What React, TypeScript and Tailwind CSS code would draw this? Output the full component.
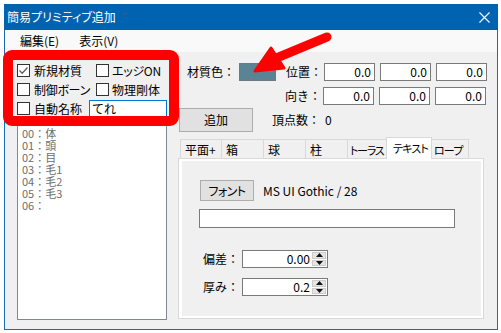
import React from "react";

const tabs = [
  { label: "平面+", w: 42 },
  { label: "箱", w: 43 },
  { label: "球", w: 43 },
  { label: "柱", w: 43 },
  { label: "トーラス", w: 42 },
  { label: "テキスト", w: 46, selected: true },
  { label: "ロープ", w: 40 },
];

const parts = ["00：体", "01：頭", "02：目", "03：毛1", "04：毛2", "05：毛3", "06："];

function Check({ checked }: { checked?: boolean }) {
  return (
    <span className="w-[13px] h-[13px] border border-[#333333] bg-white flex items-center justify-center shrink-0">
      {checked && (
        <svg width="11" height="11" viewBox="0 0 11 11">
          <path d="M1.5 5.5 L4.2 8.2 L9.5 2.5" stroke="#5f5f5f" strokeWidth="1.3" fill="none" />
        </svg>
      )}
    </span>
  );
}

function NumBox({ value }: { value: string }) {
  return (
    <div className="w-[51px] h-[18px] border border-[#7a7a7a] bg-white flex items-center justify-end pr-[3px]">
      {value}
    </div>
  );
}

function Spin({ value }: { value: string }) {
  return (
    <div className="w-[86px] h-[18px] border border-[#7a7a7a] bg-white flex items-stretch">
      <div className="flex-1 flex items-center justify-end pr-[2px]">{value}</div>
      <div className="w-[15px] flex flex-col gap-[1px] py-[1px] pr-[1px]">
        <div className="flex-1 bg-[#e5e5e5] border border-[#cccccc] flex items-center justify-center">
          <svg width="7" height="4" viewBox="0 0 7 4">
            <path d="M0 4 L3.5 0 L7 4 Z" fill="#111" />
          </svg>
        </div>
        <div className="flex-1 bg-[#e5e5e5] border border-[#cccccc] flex items-center justify-center">
          <svg width="7" height="4" viewBox="0 0 7 4">
            <path d="M0 0 L3.5 4 L7 0 Z" fill="#111" />
          </svg>
        </div>
      </div>
    </div>
  );
}

export default function App() {
  return (
    <div className="relative w-[501px] h-[333px] overflow-hidden bg-white pl-[4px] pt-[4px] font-['Noto_Sans_CJK_JP',sans-serif] text-[12px] leading-[14px] text-black">
      {/* window */}
      <div className="w-[494px] h-[326px] border border-t-0 border-[#1a6cb6] flex flex-col bg-[#f0f0f0]">
        {/* title bar */}
        <div className="h-[26px] bg-[#0063b1] flex items-center justify-between pl-[3px] pr-[8px] text-white shrink-0 -mx-[1px]">
          <span className="text-[12px] [font-feature-settings:'palt']">簡易プリミティブ追加</span>
          <svg width="11" height="11" viewBox="0 0 11 11">
            <path d="M0.5 0.5 L10.5 10.5 M10.5 0.5 L0.5 10.5" stroke="white" strokeWidth="1.1" />
          </svg>
        </div>
        {/* menu bar */}
        <div className="h-[22px] bg-[#f9f9f9] flex items-center shrink-0 pl-[15px] gap-[20px]">
          <span>編集(E)</span>
          <span>表示(V)</span>
        </div>
        {/* client */}
        <div className="flex flex-1">
          {/* left column */}
          <div className="ml-[12px] w-[150px] pt-[9px] flex flex-col">
            <div className="h-[19px] flex items-center">
              <div className="w-[79px] flex items-center gap-[4px]">
                <Check checked />
                <span className="[font-feature-settings:'palt']">新規材質</span>
              </div>
              <div className="flex items-center gap-[3px]">
                <Check />
                <span className="[font-feature-settings:'palt'] tracking-[-0.3px]">エッジON</span>
              </div>
            </div>
            <div className="h-[19px] flex items-center">
              <div className="w-[79px] flex items-center gap-[4px]">
                <Check />
                <span className="[font-feature-settings:'palt'] tracking-[-0.3px]">制御ボーン</span>
              </div>
              <div className="flex items-center gap-[3px]">
                <Check />
                <span>物理剛体</span>
              </div>
            </div>
            <div className="h-[19px] flex items-center">
              <div className="w-[72px] flex items-center gap-[4px]">
                <Check />
                <span>自動名称</span>
              </div>
              <div className="w-[78px] h-[18px] border border-[#0078d7] bg-white flex items-center pl-[2px]">
                てれ
              </div>
            </div>
            <div className="mt-[1px] h-[201px] border border-[#828790] bg-white pt-[7px] pl-[4px] text-[#6d6d6d] text-[11px] leading-[12px]">
              {parts.map((p) => (
                <div key={p} className="h-[12px] leading-[12px]">
                  {p}
                </div>
              ))}
            </div>
          </div>

          {/* right column */}
          <div className="ml-[12px] pt-[11px] flex flex-col">
            <div className="h-[18px] flex items-center">
              <span className="ml-[8px] w-[52px]">材質色：</span>
              <div className="w-[37px] h-[18px] bg-[#5a8494] border border-[#6f7a80]" />
              <span className="ml-[10px] w-[38px]">位置：</span>
              <div className="flex gap-[5px]">
                <NumBox value="0.0" />
                <NumBox value="0.0" />
                <NumBox value="0.0" />
              </div>
            </div>
            <div className="mt-[6px] h-[18px] flex items-center">
              <span className="w-[144px] text-right pr-[2px]">向き：</span>
              <div className="flex gap-[5px]">
                <NumBox value="0.0" />
                <NumBox value="0.0" />
                <NumBox value="0.0" />
              </div>
            </div>
            <div className="mt-[3px] h-[24px] flex items-center">
              <div className="w-[74px] h-[24px] bg-[#e1e1e1] border border-[#adadad] flex items-center justify-center">
                追加
              </div>
              <span className="ml-[19px] w-[53px]">頂点数：</span>
              <span>0</span>
            </div>

            {/* tabs */}
            <div className="mt-[5px] h-[21px] flex items-end ml-[1px]">
              {tabs.map((t, i) =>
                t.selected ? (
                  <div
                    key={t.label}
                    className="relative z-10 -ml-[3px] -mr-[2px] -mb-[1px] h-[22px] bg-white border border-b-0 border-[#d9d9d9] pl-[6px] pt-[3px] whitespace-nowrap text-[11px] [font-feature-settings:'palt'] tracking-[-0.8px]"
                    style={{ width: t.w }}
                  >
                    {t.label}
                  </div>
                ) : (
                  <div
                    key={t.label}
                    className={
                      "h-[19px] bg-[#f0f0f0] border border-b-0 border-[#d9d9d9] pt-[3px] whitespace-nowrap [font-feature-settings:'palt'] " +
                      (t.label === "トーラス" ? "pl-[2px] text-[11px] tracking-[-1.3px] " : t.label === "ロープ" ? "pl-[4px] text-[11px] tracking-[-0.8px] " : "pl-[4px] ") +
                      (i > 0 ? "-ml-[1px]" : "")
                    }
                    style={{ width: t.w }}
                  >
                    {t.label}
                  </div>
                )
              )}
            </div>
            <div className="-ml-[1px] w-[306px] h-[161px] border border-[#d9d9d9] bg-white pl-[3px] pt-[2px] pr-[2px] pb-[2px]">
              <div className="w-full h-full bg-[#f0f0f0] pl-[18px] pt-[19px] flex flex-col">
                <div className="flex items-center">
                  <div className="w-[54px] h-[21px] bg-[#e1e1e1] border border-[#adadad] flex items-center justify-center [font-feature-settings:'palt'] tracking-[-0.5px]">
                    フォント
                  </div>
                  <span className="ml-[9px]">MS UI Gothic / 28</span>
                </div>
                <div className="mt-[8px] -ml-[1px] w-[256px] h-[19px] border border-[#7a7a7a] bg-white" />
                <div className="mt-[22px] flex items-center">
                  <span className="ml-[3px] w-[39px]">偏差：</span>
                  <Spin value="0.00" />
                </div>
                <div className="mt-[10px] flex items-center">
                  <span className="ml-[3px] w-[39px]">厚み：</span>
                  <Spin value="0.2" />
                </div>
              </div>
            </div>
          </div>
        </div>
      </div>

      {/* annotations */}
      <div className="absolute left-[3px] top-[50px] w-[176px] h-[76px] border-[10px] border-[#ff0000] rounded-[9px]" />
      <svg className="absolute left-0 top-0" width="501" height="333" viewBox="0 0 501 333">
        <line x1="327" y1="37" x2="274" y2="59" stroke="#ff0000" strokeWidth="9" strokeLinecap="round" />
        <polygon points="255,71 271,48 284,68" fill="#ff0000" stroke="#ff0000" strokeWidth="3" strokeLinejoin="round" />
      </svg>
    </div>
  );
}
